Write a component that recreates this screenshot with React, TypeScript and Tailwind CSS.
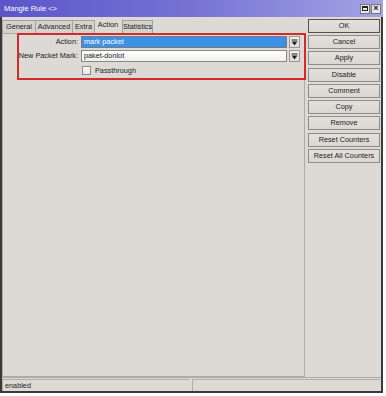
import React from 'react';

const font = { fontFamily: '"Liberation Sans", Arial, sans-serif' };

function DropArrow() {
  return (
    <svg width="7" height="7" viewBox="0 0 7 7">
      <rect x="0.5" y="0.5" width="6" height="1" fill="#222" />
      <path d="M0.5 2.5 L6.5 2.5 L3.5 6.5 Z" fill="#222" />
    </svg>
  );
}

function Field({ label, value, selected }: { label: string; value: string; selected?: boolean }) {
  return (
    <div className="flex items-center gap-[2px] h-[12px]">
      <div className="w-[76px] text-right pr-[1px] text-[#1c1c1c]">{label}</div>
      <div
        className={
          selected
            ? 'w-[206px] h-[12px] flex items-center pl-[2px] border border-[#7d7a76] bg-[#3b91e8] text-white'
            : 'w-[206px] h-[12px] flex items-center pl-[2px] border border-[#8a8783] bg-gradient-to-b from-white to-[#efefef] text-[#1c1c1c]'
        }
      >
        {value}
      </div>
      <div className="w-[11px] h-[12px] flex items-center justify-center border border-[#9a9793] bg-gradient-to-b from-[#f2f1ef] to-[#dddad6]">
        <DropArrow />
      </div>
    </div>
  );
}

function Btn({ children, def }: { children: React.ReactNode; def?: boolean }) {
  return (
    <div
      className={
        'h-[14px] flex items-center justify-center border bg-gradient-to-b from-[#e4e1dd] to-[#dad7d3] text-[#1c1c1c] ' +
        (def ? 'border-[#55524f]' : 'border-[#8f8c88]')
      }
    >
      {children}
    </div>
  );
}

const tabs = [
  { name: 'General', w: 'w-[34px]' },
  { name: 'Advanced', w: 'w-[38px]' },
  { name: 'Extra', w: 'w-[23px]' },
  { name: 'Action', w: 'w-[28px]', active: true },
  { name: 'Statistics', w: 'w-[31px]' },
];

export default function App() {
  return (
    <div className="w-[386px] h-[396px] bg-white" style={font}>
      <div className="w-[383px] h-[393px] flex flex-col text-[7.3px] leading-none">
        {/* Title bar */}
        <div className="h-[17px] flex items-center justify-between pl-[4px] pr-[2px] bg-gradient-to-r from-[#5b55c8] via-[#7673d4] to-[#a3a3e4]">
          <span className="text-white text-[7.5px]">Mangle Rule &lt;&gt;</span>
          <div className="flex gap-[1px]">
            <div className="w-[10px] h-[10px] bg-[#e8e8e8] border border-[#777] flex items-center justify-center">
              <div className="w-[6px] h-[5px] border border-[#222] border-t-2" />
            </div>
            <div className="w-[10px] h-[10px] bg-[#e8e8e8] border border-[#777] flex items-center justify-center text-[#111] text-[9px] font-bold">
              ×
            </div>
          </div>
        </div>

        {/* Body */}
        <div className="flex-1 flex flex-col border-x-2 border-b-2 border-[#3a3a3a] bg-[#dddad6]">
          <div className="flex-1 flex pt-[1px]">
            {/* Left: tabs + panel */}
            <div className="w-[303px] flex flex-col">
              <div className="h-[15px] flex items-end">
                {tabs.map((t) =>
                  t.active ? (
                    <div key={t.name} className={t.w + ' h-[15px] flex items-start justify-center pt-[3px] text-[#1c1c1c]'}>
                      {t.name}
                    </div>
                  ) : (
                    <div
                      key={t.name}
                      className={t.w + ' h-[13px] flex items-center justify-center border border-b-0 border-[#a4a19d] bg-[#d5d2ce] text-[#1c1c1c] mr-[-1px]'}
                    >
                      {t.name}
                    </div>
                  )
                )}
              </div>
              <div className="relative flex-1 border border-[#aeaba7] flex flex-col gap-[2px] pt-[2px]">
                <Field label="Action:" value="mark packet" selected />
                <Field label="New Packet Mark:" value="paket-donlot" />
                <div className="flex items-center h-[11px] pl-[79px] gap-[4px] mt-[1px] text-[#1c1c1c]">
                  <div className="w-[9px] h-[9px] border border-[#8f8c88] bg-gradient-to-b from-[#f7f7f7] to-[#e6e6e6]" />
                  <span>Passthrough</span>
                </div>
                {/* annotation */}
                <div className="absolute left-[14px] top-[-1px] w-[289px] h-[47px] border-2 border-[#d22b2b]" />
              </div>
            </div>

            {/* Right: buttons */}
            <div className="flex-1 flex flex-col pl-[3px] pr-[1px] pt-[1px]">
              <div className="flex flex-col gap-[2px]">
                <Btn def>OK</Btn>
                <Btn>Cancel</Btn>
                <Btn>Apply</Btn>
              </div>
              <div className="flex flex-col gap-[2px] mt-[3px]">
                <Btn>Disable</Btn>
                <Btn>Comment</Btn>
                <Btn>Copy</Btn>
                <Btn>Remove</Btn>
              </div>
              <div className="flex flex-col gap-[2px] mt-[3px]">
                <Btn>Reset Counters</Btn>
                <Btn>Reset All Counters</Btn>
              </div>
            </div>
          </div>

          {/* Status bar */}
          <div className="h-[14px] flex gap-[2px] border-t border-[#aeaba7] pt-[1px] pr-[1px]">
            <div className="w-[188px] h-[12px] flex items-center pl-[2px] border-t border-l border-[#b0ada9] text-[#1c1c1c]">
              enabled
            </div>
            <div className="flex-1 h-[12px] border-t border-l border-[#b0ada9]" />
          </div>
        </div>
      </div>
    </div>
  );
}
